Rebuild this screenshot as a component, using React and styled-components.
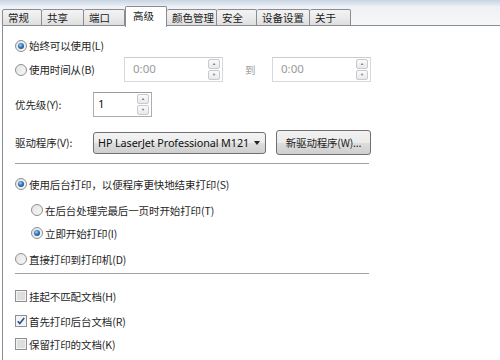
import styled, { createGlobalStyle } from "styled-components";

const GlobalStyle = createGlobalStyle`
  html, body {
    margin: 0;
    padding: 0;
    background: #ffffff;
  }
  body {
    font-family: "Noto Sans CJK SC", "Noto Sans", sans-serif;
    font-size: 10.5px;
    color: #1e1e1e;
  }
`;

const tabs = [
  { label: "常规", width: 40 },
  { label: "共享", width: 42 },
  { label: "端口", width: 41 },
  { label: "高级", width: 42, active: true },
  { label: "颜色管理", width: 50 },
  { label: "安全", width: 40 },
  { label: "设备设置", width: 53 },
  { label: "关于", width: 41 },
];

export default function App() {
  return (
    <>
      <GlobalStyle />
      <Window>
        <TopStrip />
        <TabBar>
          {tabs.map((t) => (
            <Tab key={t.label} width={t.width} active={t.active}>
              {t.label}
            </Tab>
          ))}
          <TabFill />
        </TabBar>
        <Panel>
          <Row height={23} mt={8}>
            <Radio checked />
            <Label>始终可以使用(L)</Label>
          </Row>
          <Row height={25}>
            <Radio />
            <Label width={96}>使用时间从(B)</Label>
            <Spin width={99} disabled>
              <SpinText>0:00</SpinText>
              <SpinButtons>
                <SpinButton>▲</SpinButton>
                <SpinButton>▼</SpinButton>
              </SpinButtons>
            </Spin>
            <Muted>到</Muted>
            <Spin width={99} disabled>
              <SpinText>0:00</SpinText>
              <SpinButtons>
                <SpinButton>▲</SpinButton>
                <SpinButton>▼</SpinButton>
              </SpinButtons>
            </Spin>
          </Row>
          <Row height={25} mt={10}>
            <FieldLabel>优先级(Y):</FieldLabel>
            <Spin width={59}>
              <SpinText dark>1</SpinText>
              <SpinButtons>
                <SpinButton>▲</SpinButton>
                <SpinButton>▼</SpinButton>
              </SpinButtons>
            </Spin>
          </Row>
          <Row height={25} mt={13}>
            <FieldLabel>驱动程序(V):</FieldLabel>
            <Combo>
              <span>HP LaserJet Professional M121</span>
              <ComboArrow />
            </Combo>
            <Button>新驱动程序(W)...</Button>
          </Row>
          <Separator mt={8} />
          <Row height={24} mt={7}>
            <Radio checked />
            <Label>使用后台打印，以便程序更快地结束打印(S)</Label>
          </Row>
          <Row height={24} mt={2} indent>
            <Radio />
            <Label>在后台处理完最后一页时开始打印(T)</Label>
          </Row>
          <Row height={24} mt={-1} indent>
            <Radio checked />
            <Label>立即开始打印(I)</Label>
          </Row>
          <Row height={24} mt={2}>
            <Radio />
            <Label>直接打印到打印机(D)</Label>
          </Row>
          <Separator mt={2} />
          <Row height={24} mt={9}>
            <Check />
            <Label>挂起不匹配文档(H)</Label>
          </Row>
          <Row height={24} mt={1}>
            <Check checked />
            <Label>首先打印后台文档(R)</Label>
          </Row>
          <Row height={24} mt={-1}>
            <Check />
            <Label>保留打印的文档(K)</Label>
          </Row>
        </Panel>
      </Window>
    </>
  );
}

function Radio({ checked }) {
  return (
    <RadioBox>
      <svg width="12" height="12" viewBox="0 0 12 12">
        <defs>
          <linearGradient id="rbg" x1="0" y1="0" x2="1" y2="1">
            <stop offset="0" stopColor="#e2e2e2" />
            <stop offset="1" stopColor="#f8f8f8" />
          </linearGradient>
          <radialGradient id="rdot" cx="0.4" cy="0.35" r="0.7">
            <stop offset="0" stopColor="#a9d4f5" />
            <stop offset="0.5" stopColor="#3a7cc7" />
            <stop offset="1" stopColor="#1b4a8a" />
          </radialGradient>
        </defs>
        <circle cx="6" cy="6" r="5.5" fill="url(#rbg)" stroke="#8d8f91" strokeWidth="1" />
        {checked && <circle cx="6" cy="6" r="3" fill="url(#rdot)" />}
      </svg>
    </RadioBox>
  );
}

function Check({ checked }) {
  return (
    <RadioBox>
      <svg width="12" height="12" viewBox="0 0 12 12">
        <rect x="0.5" y="0.5" width="11" height="11" fill="#f3f3f3" stroke="#8e8f91" />
        <rect x="2" y="2" width="8" height="8" fill={checked ? "#f4f4f4" : "#dedede"} />
        {checked && (
          <path d="M2.8 6.2 L4.8 8.5 L9.2 3" fill="none" stroke="#25519a" strokeWidth="1.6" />
        )}
      </svg>
    </RadioBox>
  );
}

const Window = styled.div`
  width: 500px;
  height: 360px;
  overflow: hidden;
  display: flex;
  flex-direction: column;
  background: #ffffff;
`;

const TopStrip = styled.div`
  height: 6px;
  background: linear-gradient(#c8d4e3, #e8edf3);
`;

const TabBar = styled.div`
  height: 20px;
  display: flex;
  align-items: flex-end;
  padding-left: 2px;
  background: linear-gradient(#eef1f5, #f7f7f7);
`;

const Tab = styled.div`
  box-sizing: border-box;
  width: ${(p) => p.width}px;
  height: ${(p) => (p.active ? 21 : 17)}px;
  margin-bottom: ${(p) => (p.active ? -1 : 0)}px;
  padding: ${(p) => (p.active ? "2px 0 0 7px" : "1px 0 0 5px")};
  border: 1px solid #898c95;
  border-bottom: ${(p) => (p.active ? "none" : "1px solid #898c95")};
  border-left-width: ${(p) => (p.active ? 1 : 0)}px;
  border-radius: 2px 2px 0 0;
  background: ${(p) =>
    p.active ? "#ffffff" : "linear-gradient(#f3f3f3, #ebebeb 50%, #dedede)"};
  line-height: 14px;
  white-space: nowrap;
  color: #1a1a1a;
  position: relative;
  z-index: ${(p) => (p.active ? 1 : 0)};
  &:first-child {
    border-left-width: 1px;
  }
`;

const TabFill = styled.div`
  flex: 1;
  border-bottom: 1px solid #898c95;
`;

const Panel = styled.div`
  flex: 1;
  display: flex;
  flex-direction: column;
  margin-left: 2px;
  padding-left: 12px;
  border-left: 1px solid #898c95;
  background: #ffffff;
`;

const Row = styled.div`
  height: ${(p) => p.height}px;
  margin-top: ${(p) => p.mt || 0}px;
  display: flex;
  align-items: center;
  padding-left: ${(p) => (p.indent ? 16 : 0)}px;
`;

const RadioBox = styled.span`
  width: 12px;
  height: 12px;
  display: inline-flex;
  margin-right: 1px;
  flex-shrink: 0;
  > svg {
    display: block;
  }
`;

const Label = styled.span`
  box-sizing: border-box;
  width: ${(p) => (p.width ? `${p.width}px` : "auto")};
  padding-left: 1px;
  white-space: nowrap;
  letter-spacing: -0.1px;
`;

const FieldLabel = styled.span`
  width: 78px;
  white-space: nowrap;
  letter-spacing: -0.1px;
`;

const Muted = styled.span`
  width: 11px;
  color: #a0a0a0;
  margin: 0 16px 0 22px;
`;

const Spin = styled.div`
  box-sizing: border-box;
  width: ${(p) => p.width}px;
  height: 25px;
  display: flex;
  align-items: center;
  justify-content: space-between;
  padding: 0 2px 0 8px;
  border: 1px solid ${(p) => (p.disabled ? "#d5d8dd" : "#abadb3")};
  border-top-color: ${(p) => (p.disabled ? "#c9ccd2" : "#9a9ca3")};
  background: #ffffff;
  color: ${(p) => (p.disabled ? "#9a9a9a" : "#111")};
  font-family: "Noto Sans", sans-serif;
  font-size: 11.5px;
`;

const SpinText = styled.span`
  margin-top: -3px;
  margin-left: ${(p) => (p.dark ? -4 : 0)}px;
`;

const SpinButtons = styled.div`
  display: flex;
  flex-direction: column;
  gap: 1px;
`;

const SpinButton = styled.div`
  box-sizing: border-box;
  width: 12px;
  height: 10px;
  border: 1px solid #c8cacd;
  border-radius: 2px;
  background: linear-gradient(#fafafa, #e9e9e9);
  color: #6a7c92;
  font-size: 4px;
  line-height: 8px;
  text-align: center;
`;

const Combo = styled.div`
  box-sizing: border-box;
  width: 173px;
  height: 22px;
  display: flex;
  align-items: center;
  justify-content: space-between;
  padding: 0 5px 0 4px;
  border: 1px solid #707070;
  border-radius: 3px;
  background: linear-gradient(#f4f4f4, #ebebeb 50%, #dddddd 51%, #cfcfcf);
  font-family: "Noto Sans", sans-serif;
  font-size: 10.8px;
  color: #111;
  white-space: nowrap;
  letter-spacing: -0.1px;
`;

const ComboArrow = styled.span`
  width: 0;
  height: 0;
  border-left: 3.5px solid transparent;
  border-right: 3.5px solid transparent;
  border-top: 4px solid #222;
  margin-left: 4px;
`;

const Button = styled.div`
  box-sizing: border-box;
  width: 95px;
  height: 25px;
  margin-left: 10px;
  display: flex;
  align-items: center;
  justify-content: center;
  border: 1px solid #707070;
  border-radius: 3px;
  background: linear-gradient(#f2f2f2, #ebebeb 50%, #dddddd 51%, #cfcfcf);
  letter-spacing: -0.2px;
  white-space: nowrap;
`;

const Separator = styled.div`
  width: 354px;
  height: 1px;
  margin-top: ${(p) => p.mt || 0}px;
  background: #a0a0a0;
  border-bottom: 1px solid #ffffff;
  flex-shrink: 0;
`;
